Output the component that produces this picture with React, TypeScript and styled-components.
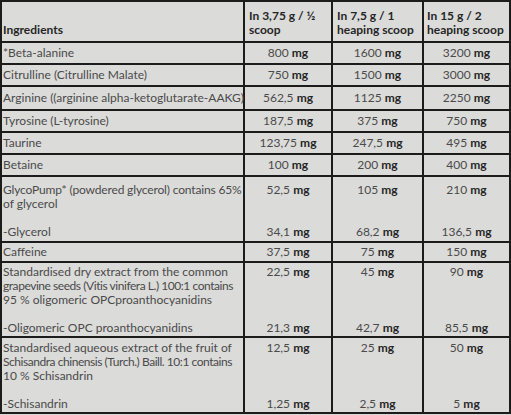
import React from "react";
import styled, { createGlobalStyle } from "styled-components";

const Global = createGlobalStyle`
  html, body { margin: 0; padding: 0; background: #d9d9d7; }
  body { font-family: Lato, "Liberation Sans", Arial, sans-serif; }
`;

const Table = styled.div`
  display: grid;
  grid-template-columns: 241px 86px 89px 85px;
  gap: 2px;
  padding: 2px;
  background: #1c1c1c;
  width: 511px;
  box-sizing: border-box;
  font-size: 12px;
  color: #4a4a4a;
`;

const HeadCell = styled.div<{ $pl: number }>`
  background: #dbdbd9;
  height: 39px;
  box-sizing: border-box;
  padding: 0 0 4px ${(p) => p.$pl}px;
  display: flex;
  flex-direction: column;
  justify-content: flex-end;
  font-weight: 700;
  font-size: 12px;
  color: #262626;
  line-height: 14px;
  white-space: nowrap;
`;

const NameCell = styled.div<{ $h: number; $pt: number }>`
  background: #dbdbd9;
  height: ${(p) => p.$h}px;
  box-sizing: border-box;
  padding: ${(p) => p.$pt}px 0 0 1px;
  line-height: 14px;
  white-space: nowrap;
  display: flex;
  flex-direction: column;
`;

const Line = styled.div<{ $ls: number }>`
  height: 14px;
  letter-spacing: ${(p) => p.$ls}px;
`;

const ValueCell = styled.div<{ $h: number; $pt: number; $pb: number }>`
  background: #dbdbd9;
  height: ${(p) => p.$h}px;
  box-sizing: border-box;
  padding: ${(p) => p.$pt}px 0 ${(p) => p.$pb}px 0;
  line-height: 14px;
  display: flex;
  flex-direction: column;
  justify-content: space-between;
  align-items: center;
  white-space: nowrap;
`;

const Unit = styled.b`
  font-weight: 700;
  color: #262626;
`;

type NameLine = [string, number];

type Row = {
  h: number;
  pt: number;
  pb: number;
  name: NameLine[];
  vals: string[][];
};

const rows: Row[] = [
  { h: 20, pt: 3, pb: 3, name: [["*Beta-alanine", 0]], vals: [["800"], ["1600"], ["3200"]] },
  { h: 20, pt: 3, pb: 3, name: [["Citrulline (Citrulline Malate)", 0]], vals: [["750"], ["1500"], ["3000"]] },
  { h: 22, pt: 4, pb: 4, name: [["Arginine ((arginine alpha-ketoglutarate-AAKG)", 0]], vals: [["562,5"], ["1125"], ["2250"]] },
  { h: 20, pt: 3, pb: 3, name: [["Tyrosine (L-tyrosine)", 0]], vals: [["187,5"], ["375"], ["750"]] },
  { h: 20, pt: 3, pb: 3, name: [["Taurine", 0]], vals: [["123,75"], ["247,5"], ["495"]] },
  { h: 20, pt: 3, pb: 3, name: [["Betaine", 0]], vals: [["100"], ["200"], ["400"]] },
  {
    h: 64,
    pt: 6,
    pb: 2,
    name: [
      ["GlycoPump* (powdered glycerol) contains 65%", -0.15],
      ["of glycerol", 0],
      ["", 0],
      ["-Glycerol", 0],
    ],
    vals: [["52,5", "34,1"], ["105", "68,2"], ["210", "136,5"]],
  },
  { h: 18, pt: 2, pb: 2, name: [["Caffeine", 0]], vals: [["37,5"], ["75"], ["150"]] },
  {
    h: 73,
    pt: 2,
    pb: 1,
    name: [
      ["Standardised dry extract from the common", 0],
      ["grapevine seeds (Vitis vinifera L.) 100:1 contains", -0.45],
      ["95 % oligomeric OPCproanthocyanidins", 0],
      ["", 0],
      ["-Oligomeric OPC proanthocyanidins", 0],
    ],
    vals: [["22,5", "21,3"], ["45", "42,7"], ["90", "85,5"]],
  },
  {
    h: 74,
    pt: 3,
    pb: 1,
    name: [
      ["Standardised aqueous extract of the fruit of", 0],
      ["Schisandra chinensis (Turch.) Baill. 10:1 contains", -0.45],
      ["10 % Schisandrin", 0],
      ["", 0],
      ["-Schisandrin", 0],
    ],
    vals: [["12,5", "1,25"], ["25", "2,5"], ["50", "5"]],
  },
];

export default function App() {
  return (
    <>
      <Global />
      <Table>
        <HeadCell $pl={1}>Ingredients</HeadCell>
        <HeadCell $pl={4}>
          <div>In 3,75 g / ½</div>
          <div>scoop</div>
        </HeadCell>
        <HeadCell $pl={4}>
          <div>In 7,5 g / 1</div>
          <div>heaping scoop</div>
        </HeadCell>
        <HeadCell $pl={3}>
          <div>In 15 g / 2</div>
          <div>heaping scoop</div>
        </HeadCell>
        {rows.map((r, i) => (
          <React.Fragment key={i}>
            <NameCell $h={r.h} $pt={r.pt}>
              {r.name.map(([l, ls], j) => (
                <Line key={j} $ls={ls}>
                  {l}
                </Line>
              ))}
            </NameCell>
            {r.vals.map((v, k) => (
              <ValueCell key={k} $h={r.h} $pt={r.pt} $pb={r.pb}>
                {v.map((n, j) => (
                  <div key={j}>
                    {n} <Unit>mg</Unit>
                  </div>
                ))}
              </ValueCell>
            ))}
          </React.Fragment>
        ))}
      </Table>
    </>
  );
}
